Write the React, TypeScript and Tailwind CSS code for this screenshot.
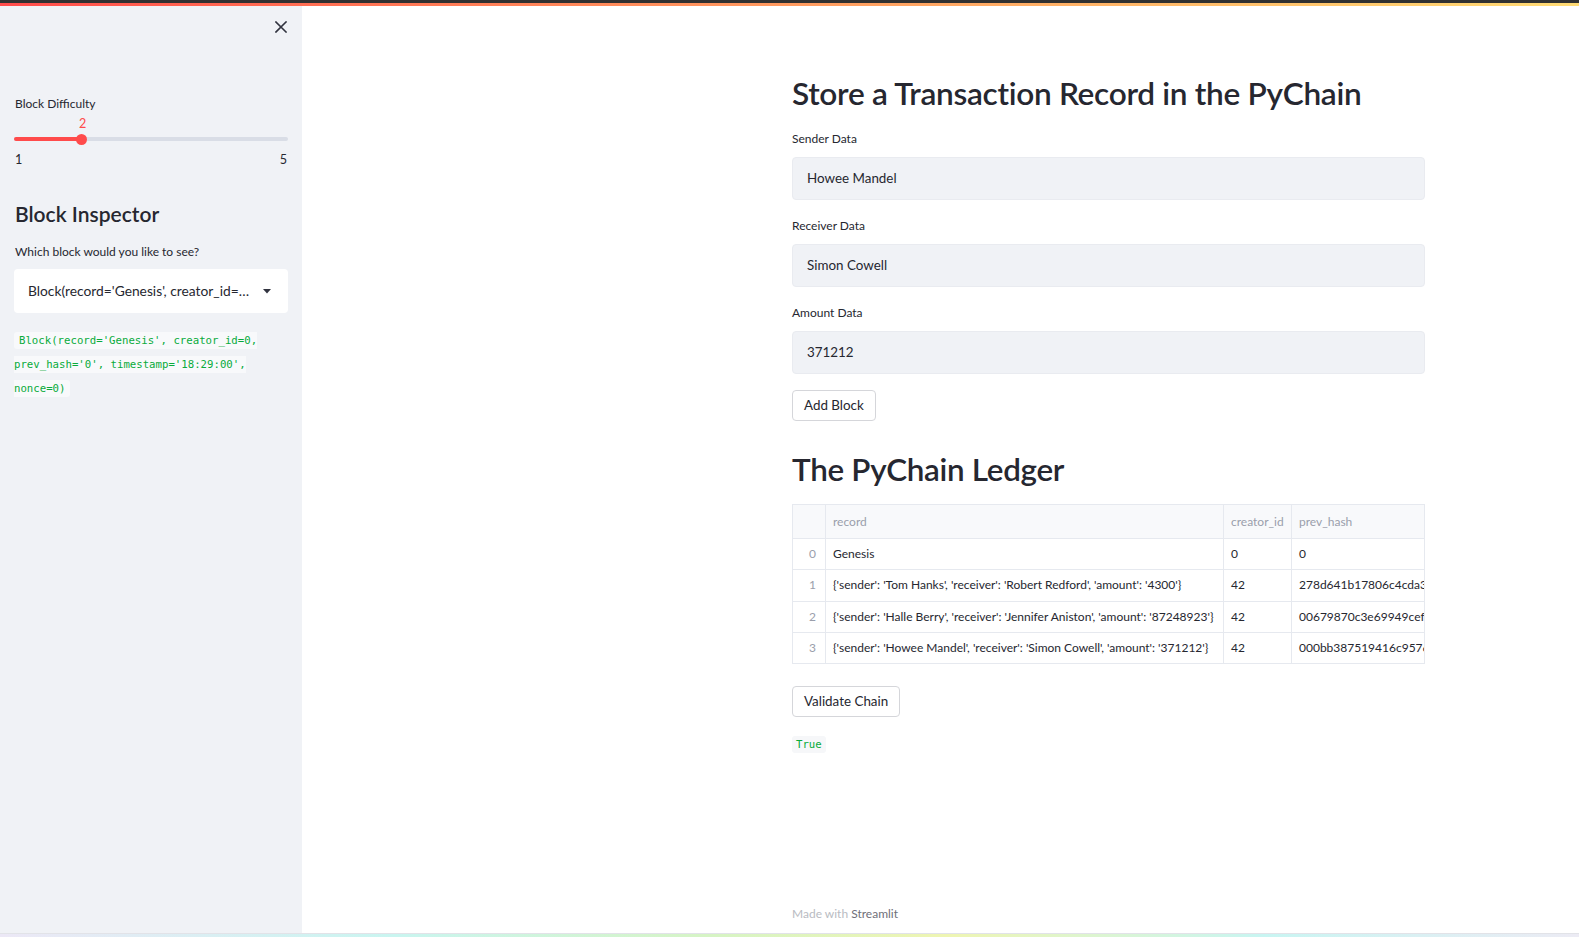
import React from 'react';

const rows = [
  { i: 0, record: 'Genesis', creator: '0', hash: '0' },
  {
    i: 1,
    record: "{'sender': 'Tom Hanks', 'receiver': 'Robert Redford', 'amount': '4300'}",
    creator: '42',
    hash: '278d641b17806c4cda33f0e1b9a7c2d45e8f61',
  },
  {
    i: 2,
    record: "{'sender': 'Halle Berry', 'receiver': 'Jennifer Aniston', 'amount': '87248923'}",
    creator: '42',
    hash: '00679870c3e69949cef0c1d2e8b4a7f93c05',
  },
  {
    i: 3,
    record: "{'sender': 'Howee Mandel', 'receiver': 'Simon Cowell', 'amount': '371212'}",
    creator: '42',
    hash: '000bb387519416c95766e2a1d0f83bc47a92',
  },
];

function Field({ label, value }: { label: string; value: string }) {
  return (
    <div>
      <div className="h-[20px] leading-[20px] text-[12px] text-[#262730]">{label}</div>
      <div className="mt-[8px] h-[43px] flex items-center px-[14px] rounded-[4px] bg-[#f0f2f6] border border-[#e9ebf0] text-[13.4px] text-[#262730]">
        {value}
      </div>
    </div>
  );
}

function Button({ children }: { children: React.ReactNode }) {
  return (
    <button className="h-[31px] px-[11px] rounded-[4px] border border-[#d5d6da] bg-white text-[13.4px] text-[#262730] leading-none">
      {children}
    </button>
  );
}

export default function App() {
  return (
    <div className="h-[937px] w-full flex flex-col overflow-hidden bg-white font-[family-name:Lato,'Noto_Sans',sans-serif] text-[#262730]">
      {/* top decoration */}
      <div className="h-[3px] bg-[#313131]" />
      <div className="h-[3px] bg-gradient-to-r from-[#ff4b4b] to-[#ffdb74]" />

      <div className="flex-1 flex min-h-0">
        {/* Sidebar */}
        <aside className="w-[302px] shrink-0 bg-[#f0f2f6] pl-[14px] pr-[14px]">
          <div className="h-[42px] flex items-center justify-end pr-[1px]">
            <svg width="12" height="12" viewBox="0 0 12 12">
              <path d="M1 1 L11 11 M11 1 L1 11" stroke="#31333f" strokeWidth="1.6" strokeLinecap="square" />
            </svg>
          </div>

          <div className="mt-[46px] h-[20px] leading-[20px] text-[12px] pl-[1px]">Block Difficulty</div>
          <div className="h-[20px] leading-[20px] text-[12.6px] text-[#ff4b4b] pl-[65px]">2</div>
          <div className="relative h-[10px] flex items-center">
            <div className="h-[4px] w-full rounded-full bg-[#d9dde6] flex">
              <div className="h-full w-[68px] rounded-l-full bg-[#ff4b4b]" />
            </div>
            <div className="absolute left-[62px] top-[-0.5px] w-[11px] h-[11px] rounded-full bg-[#ff4b4b]" />
          </div>
          <div className="mt-[6px] h-[20px] leading-[20px] flex justify-between text-[12.6px] px-[1px]">
            <span>1</span>
            <span>5</span>
          </div>

          <h2 className="mt-[29px] h-[30px] leading-[30px] text-[21px] font-semibold pl-[1px]">Block Inspector</h2>
          <div className="mt-[13px] h-[20px] leading-[20px] text-[12px] pl-[1px]">Which block would you like to see?</div>
          <div className="mt-[7px] h-[44px] rounded-[4px] bg-white flex items-center justify-between pl-[14px] pr-[17px]">
            <span className="text-[13.8px] whitespace-nowrap">Block(record='Genesis', creator_id=…</span>
            <svg width="8" height="5" viewBox="0 0 8 5">
              <path d="M0 0 L8 0 L4 4.5 Z" fill="#31333f" />
            </svg>
          </div>

          <p className="mt-[15px] leading-[23px] text-[10.7px]">
            <code className="font-[family-name:'DejaVu_Sans_Mono',monospace] text-[10.7px] text-[#09ab3b] bg-[#f8f9fb] px-[5px] py-[2px] rounded-[3px]">
              Block(record='Genesis', creator_id=0, prev_hash='0', timestamp='18:29:00', nonce=0)
            </code>
          </p>
        </aside>

        {/* Main */}
        <main className="flex-1 flex flex-col min-w-0">
          <div className="ml-[490px] w-[633px] pt-[63px]">
            <h1 className="h-[48px] leading-[48px] text-[31.6px] font-semibold tracking-[-0.3px] whitespace-nowrap">
              Store a Transaction Record in the PyChain
            </h1>

            <div className="mt-[12px] flex flex-col gap-[16px]">
              <Field label="Sender Data" value="Howee Mandel" />
              <Field label="Receiver Data" value="Simon Cowell" />
              <Field label="Amount Data" value="371212" />
            </div>

            <div className="mt-[16px]">
              <Button>Add Block</Button>
            </div>

            <h2 className="mt-[24px] h-[48px] leading-[48px] text-[31.4px] font-semibold tracking-[-0.3px]">The PyChain Ledger</h2>

            {/* Ledger table */}
            <div className="mt-[11px] border border-[#e6e9ef] text-[12px] overflow-hidden">
              <div className="h-[33px] flex bg-[#f8f9fb] text-[#9a9eab]">
                <div className="w-[33px] shrink-0 border-r border-[#e6e9ef]" />
                <div className="w-[398px] shrink-0 border-r border-[#e6e9ef] px-[7px] flex items-center">record</div>
                <div className="w-[68px] shrink-0 border-r border-[#e6e9ef] px-[7px] flex items-center">creator_id</div>
                <div className="flex-1 px-[7px] flex items-center whitespace-nowrap overflow-hidden">prev_hash</div>
              </div>
              {rows.map((r) => (
                <div key={r.i} className="h-[31.25px] flex border-t border-[#e6e9ef]">
                  <div className="w-[33px] shrink-0 border-r border-[#e6e9ef] pr-[9px] flex items-center justify-end text-[#9a9eab]">
                    {r.i}
                  </div>
                  <div className="w-[398px] shrink-0 border-r border-[#e6e9ef] px-[7px] flex items-center whitespace-nowrap overflow-hidden">
                    {r.record}
                  </div>
                  <div className="w-[68px] shrink-0 border-r border-[#e6e9ef] px-[7px] flex items-center">{r.creator}</div>
                  <div className="flex-1 pl-[7px] flex items-center whitespace-nowrap overflow-hidden">{r.hash}</div>
                </div>
              ))}
            </div>

            <div className="mt-[22px]">
              <Button>Validate Chain</Button>
            </div>

            <p className="mt-[15px] leading-[23px] text-[10.7px]">
              <code className="font-[family-name:'DejaVu_Sans_Mono',monospace] text-[10.7px] text-[#09ab3b] bg-[#f6f7f9] px-[4px] py-[2px] rounded-[3px]">
                True
              </code>
            </p>
          </div>

          <div className="mt-auto ml-[490px] pb-[8px] h-[29px] leading-[20px] text-[12px]">
            <span className="text-[#b9bbc2]">Made with </span>
            <span className="text-[#6f7079]">Streamlit</span>
          </div>
        </main>
      </div>

      {/* bottom line */}
      <div className="h-[1px] bg-[#e2e3e8]" />
      <div className="h-[3px] bg-[linear-gradient(90deg,#ece8f6_0%,#c9f5f0_25%,#d6f4c4_45%,#eef5b2_60%,#c8f5f2_80%,#ecebf4_100%)]" />
    </div>
  );
}
